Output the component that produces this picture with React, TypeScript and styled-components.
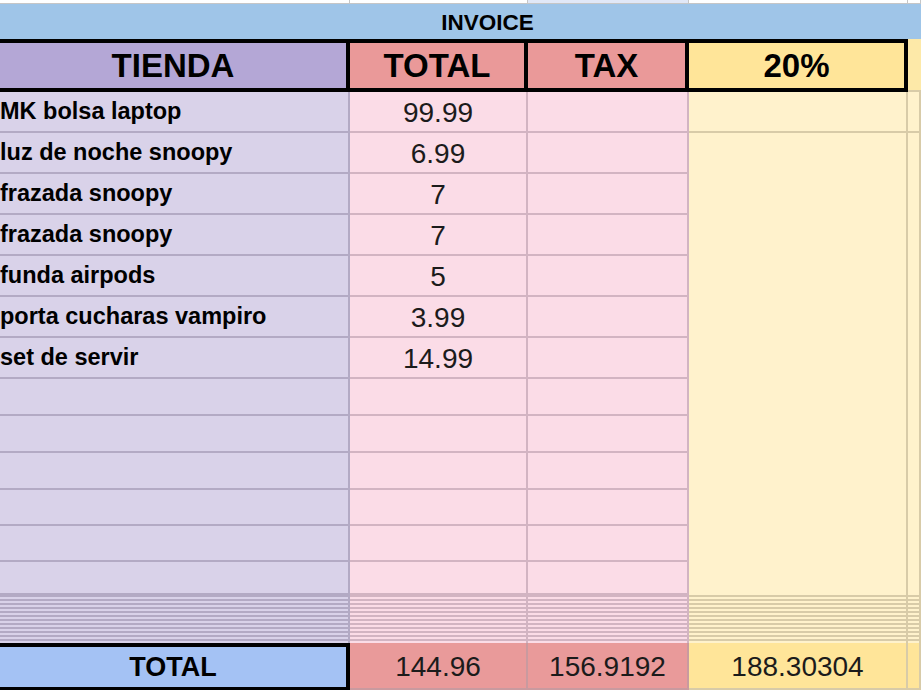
import React from "react";
import styled, { createGlobalStyle, css } from "styled-components";

const Global = createGlobalStyle`
  html, body { margin: 0; padding: 0; background: #ffffff; }
  body { font-family: "Liberation Sans", Arial, sans-serif; }
`;

type Tone = "purple" | "pink" | "yellow";

const light: Record<Tone, string> = {
  purple: "#d9d2e9",
  pink: "#fbdce7",
  yellow: "#fff2cc",
};
const line: Record<Tone, string> = {
  purple: "#b3aac4",
  pink: "#d2b4c2",
  yellow: "#d8cba8",
};

const Sheet = styled.div`
  display: grid;
  grid-template-columns: 350px 178px 161px 219px 1fr;
  grid-template-rows: 4px 35px 53px repeat(7, 41px) 37px 37px 37px 36px 36px 33px 48px 47px;
  width: 921px;
  height: 690px;
  overflow: hidden;
  font-family: "Liberation Sans", Arial, sans-serif;
  color: #000;
`;

const StripCell = styled.div<{ $bg?: string }>`
  box-sizing: border-box;
  background: ${(p) => p.$bg ?? "#ffffff"};
  border-right: 1px solid #c6c6c6;
  border-bottom: 1px solid #c6c6c6;
`;

const Banner = styled.div`
  grid-column: 1 / -1;
  box-sizing: border-box;
  background: #9fc5e8;
  display: flex;
  align-items: center;
  justify-content: center;
  padding: 3px 0 0 54px;
  font-weight: 700;
  font-size: 22.5px;
`;

const HeadCell = styled.div<{ $bg: string; $edge?: boolean }>`
  box-sizing: border-box;
  background: ${(p) => p.$bg};
  display: flex;
  align-items: center;
  justify-content: center;
  font-weight: 700;
  font-size: 33px;
  ${(p) =>
    p.$edge
      ? css`
          border-bottom: 2px solid #d8cba8;
        `
      : css`
          border-top: 4px solid #000;
          border-bottom: 4px solid #000;
          border-right: 4px solid #000;
        `}
`;

const Cell = styled.div<{ $tone: Tone; $last?: boolean }>`
  box-sizing: border-box;
  background: ${(p) => light[p.$tone]};
  border-right: 2px solid ${(p) => line[p.$tone]};
  border-bottom: ${(p) => (p.$last ? "none" : `2px solid ${line[p.$tone]}`)};
  display: flex;
  align-items: center;
  min-width: 0;
  white-space: nowrap;
  overflow: hidden;
`;

const ItemCell = styled(Cell)`
  font-weight: 700;
  font-size: 23.5px;
  padding: 0 0 0 0;
`;

const NumCell = styled(Cell)`
  justify-content: center;
  font-size: 28px;
  color: #1b1b1b;
  padding-top: 3px;
`;

const Stripes = styled.div<{ $tone: Tone }>`
  box-sizing: border-box;
  border-right: 2px solid ${(p) => line[p.$tone]};
  background: repeating-linear-gradient(
    to bottom,
    ${(p) => line[p.$tone]} 0px,
    ${(p) => line[p.$tone]} 2px,
    ${(p) => light[p.$tone]} 2px,
    ${(p) => light[p.$tone]} 4px
  );
`;

const TotalLabel = styled.div`
  box-sizing: border-box;
  background: #a4c2f4;
  border-top: 4px solid #000;
  border-right: 4px solid #000;
  border-bottom: 3px solid #000;
  display: flex;
  align-items: center;
  justify-content: center;
  font-weight: 700;
  font-size: 27px;
`;

const TotalValue = styled.div<{ $bg: string; $line: string }>`
  box-sizing: border-box;
  background: ${(p) => p.$bg};
  border-right: 2px solid ${(p) => p.$line};
  border-bottom: 2px solid ${(p) => p.$line};
  display: flex;
  align-items: center;
  justify-content: center;
  font-size: 28px;
  color: #1b1b1b;
  padding-top: 2px;
`;

const items: [string, string][] = [
  ["MK bolsa laptop", "99.99"],
  ["luz de noche snoopy", "6.99"],
  ["frazada snoopy", "7"],
  ["frazada snoopy", "7"],
  ["funda airpods", "5"],
  ["porta cucharas vampiro", "3.99"],
  ["set de servir", "14.99"],
];

const emptyRows = 6;

export default function App() {
  const rows = [...items, ...Array.from({ length: emptyRows }, () => ["", ""] as [string, string])];
  const merged = `5 / span ${rows.length - 1}`;
  return (
    <>
      <Global />
      <Sheet>
        <StripCell />
        <StripCell />
        <StripCell $bg="#e1e8f7" />
        <StripCell />
        <StripCell />

        <Banner>INVOICE</Banner>

        <HeadCell $bg="#b4a7d6">TIENDA</HeadCell>
        <HeadCell $bg="#ea9999">TOTAL</HeadCell>
        <HeadCell $bg="#ea9999">TAX</HeadCell>
        <HeadCell $bg="#ffe599">20%</HeadCell>
        <HeadCell $bg="#fde9a8" $edge />

        {rows.map(([name, value], i) => (
          <React.Fragment key={i}>
            <ItemCell $tone="purple" style={{ gridRow: i + 4, gridColumn: 1 }}>{name}</ItemCell>
            <NumCell $tone="pink" style={{ gridRow: i + 4, gridColumn: 2 }}>{value}</NumCell>
            <Cell $tone="pink" style={{ gridRow: i + 4, gridColumn: 3 }} />
          </React.Fragment>
        ))}
        <Cell $tone="yellow" style={{ gridRow: 4, gridColumn: 4 }} />
        <Cell $tone="yellow" style={{ gridRow: 4, gridColumn: 5 }} />
        <Cell $tone="yellow" $last style={{ gridRow: merged, gridColumn: 4 }} />
        <Cell $tone="yellow" $last style={{ gridRow: merged, gridColumn: 5 }} />

        <Stripes $tone="purple" />
        <Stripes $tone="pink" />
        <Stripes $tone="pink" />
        <Stripes $tone="yellow" />
        <Stripes $tone="yellow" />

        <TotalLabel>TOTAL</TotalLabel>
        <TotalValue $bg="#e99a9a" $line="#c99a9f">144.96</TotalValue>
        <TotalValue $bg="#e99a9a" $line="#c99a9f">156.9192</TotalValue>
        <TotalValue $bg="#ffe599" $line="#d8cba8">188.30304</TotalValue>
        <TotalValue $bg="#ffe599" $line="#d8cba8" />
      </Sheet>
    </>
  );
}
